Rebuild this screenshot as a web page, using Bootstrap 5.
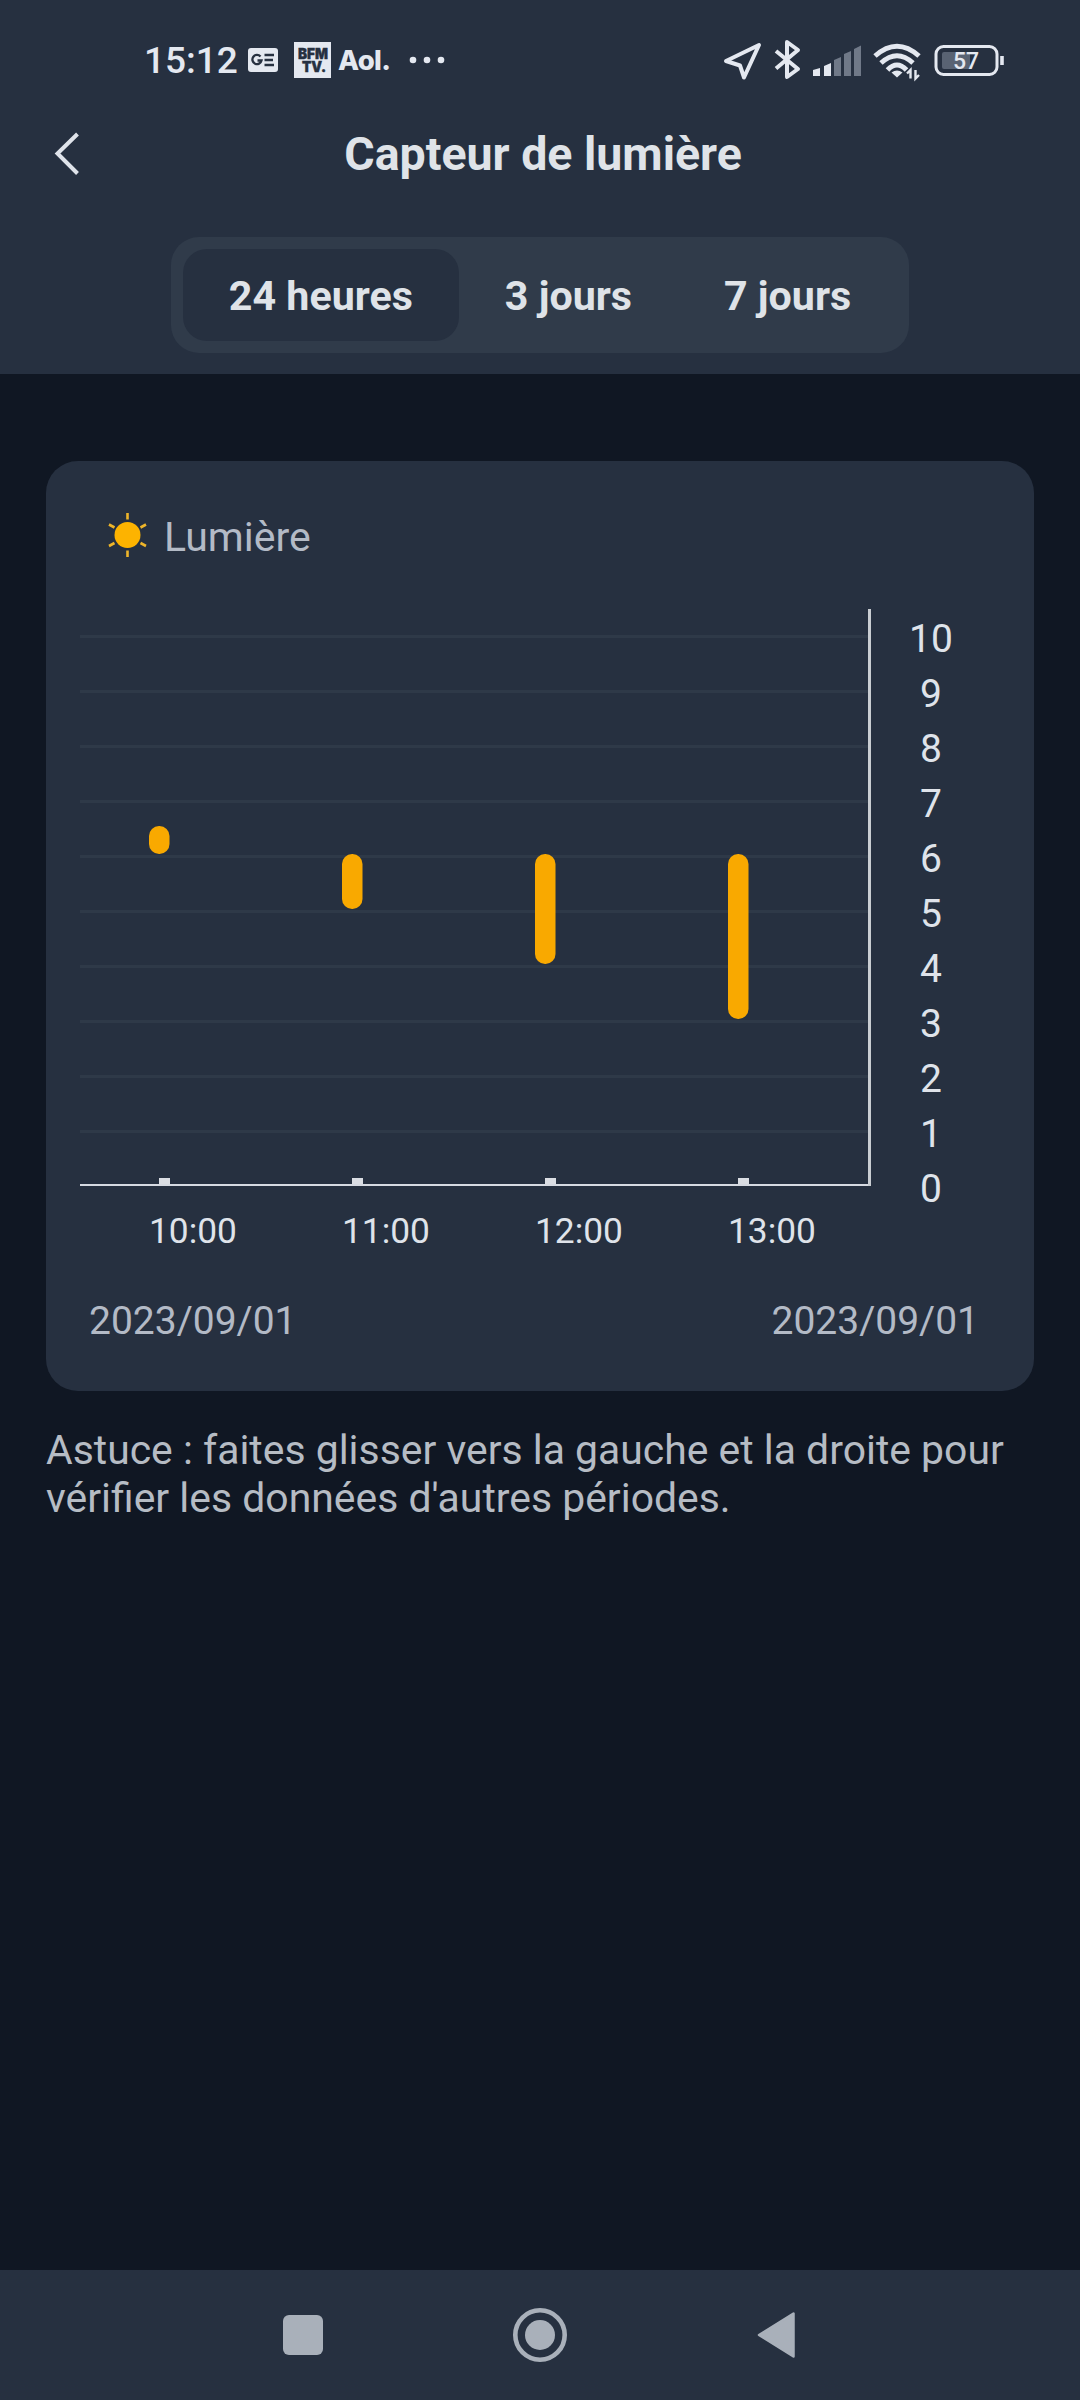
<!DOCTYPE html>
<html lang="fr" data-bs-theme="dark">
<head>
<meta charset="utf-8">
<meta name="viewport" content="width=device-width, initial-scale=1">
<title>Capteur de lumière</title>
<link href="https://cdn.jsdelivr.net/npm/bootstrap@5.3.0/dist/css/bootstrap.min.css" rel="stylesheet">
<style>
  body { font-family: Roboto, "Noto Sans", sans-serif; background: #101723; color: #dfe3ea; min-height: 2400px; }
  svg { display: block; flex: none; }
  .panel-bg { background: #263040; }
  .app-head { height: 374px; }
  .status { height: 110px; padding: 30px 76px 0 144px; color: #e4e8f0; }
  .clock { font-size: 37px; font-weight: 500; line-height: 62px; width: 104px; }
  .aol { font: 800 27.5px/60px Inter, sans-serif; letter-spacing: -.6px; width: 71px; margin-left: 7px; }
  .title-row { height: 88px; padding: 0 54px 0 54px; }
  .title-row h1 { font-size: 46.5px; font-weight: 700; line-height: 90px; color: #dfe3e8; }
  .seg { width: max-content; margin-top: 39px; padding: 12px; border-radius: 28px; background: #303b4a; }
  .seg .nav-link { height: 92px; line-height: 94px; padding: 0 46px; border-radius: 24px; font-size: 41.2px; font-weight: 700; color: #dfe3e8; }
  .seg .nav-link.active { background: #263040; color: #dfe3e8; }
  .light-card { margin: 87px 46px 0; height: 930px; border: 0; border-radius: 32px; background: #263040; color: #dfe3ea; }
  .legend { height: 148px; padding: 52px 0 0 62px; line-height: 49px; font-size: 41px; color: #b3bac6; }
  .y-labels { width: 120px; font-size: 39px; padding-top: 3px; height: 578px; }
  .y-labels div { line-height: 55px; height: 55px; }
  .x-labels { padding-left: 103px; font-size: 35.3px; line-height: 44px; margin-top: 22px; }
  .x-labels div { width: 193px; }
  .dates { padding: 0 55px 0 43px; margin-top: 44px; font-size: 39px; line-height: 48px; color: #b3bac6; }
  .tip { margin: 35px 46px 0; font-size: 40.9px; line-height: 48px; color: #b6bcc4; }
  .sys-nav { height: 130px; }
</style>
<script src="https://cdn.jsdelivr.net/npm/bootstrap@5.3.0/dist/js/bootstrap.bundle.min.js"></script>
</head>
<body class="d-flex flex-column">
<header class="app-head panel-bg">
  <div class="status d-flex justify-content-between">
    <div class="d-flex align-items-start">
      <div class="clock">15:12</div>
      <svg width="83" height="60" viewBox="0 0 83 60">
        <rect y="18" width="30" height="24" rx="3" fill="#e4e8f0"/>
        <path d="M12.500 26.500A4.600 4.600 0 1 0 13.500 30.500H9.500M16.500 25H26M16.500 30H25M16.500 35H26" fill="none" stroke="#263040" stroke-width="2.300"/>
        <rect x="46" y="12" width="37" height="36" fill="#e4e8f0"/>
        <g fill="#263040" stroke="#263040" stroke-width=".4" font-family="Inter, sans-serif" font-weight="900" font-size="14">
          <text x="50" y="29" textLength="30" lengthAdjust="spacingAndGlyphs">BFM</text>
          <text x="54" y="42" textLength="24" lengthAdjust="spacingAndGlyphs">TV.</text>
        </g>
      </svg>
      <div class="aol">Aol.</div>
      <svg width="36" height="60" fill="#e4e8f0"><circle cx="4" cy="30" r="3.300"/><circle cx="18" cy="30" r="3.300"/><circle cx="32" cy="30" r="3.300"/></svg>
    </div>
    <svg width="284" height="60" viewBox="720 30 284 60" fill="none" stroke="#e4e8f0">
      <path d="M726 61L759 45L744 77.500L740 65.500Z" stroke-width="4" stroke-linejoin="round"/>
      <path d="M776 51L798 69L787 77V42L798 50L776 68.500" stroke-width="4" stroke-linejoin="round"/>
      <g stroke="none" fill="#e4e8f0">
        <path d="M813 76V70L820 68V76ZM824 76V66L831 63V76Z"/>
        <path d="M834 76V60L841 57V76ZM844 76V54L851 51V76ZM854 76V49L861 45.500V76Z" fill="#707988"/>
      </g>
      <g stroke-width="5">
        <path d="M875 56Q897 36.500 919 56M881 63Q897 48.500 913 63M887.500 70Q897 60 906.500 70"/>
        <path d="M891.500 72.500Q897 68.500 902.500 72.500L897 77.500Z" fill="#e4e8f0" stroke="none"/>
      </g>
      <path d="M910.500 78.500V70L907 73.500M915.500 70V78.500L919 75" stroke-width="2.400"/>
      <rect x="936" y="46.500" width="61" height="28" rx="7.500" stroke-width="3"/>
      <rect x="942" y="52" width="28" height="17" rx="2" fill="#596373" stroke="none"/>
      <path d="M1002 56V65" stroke-width="3.600"/>
      <text x="966" y="69" text-anchor="middle" font-size="23" font-weight="500" fill="#e4e8f0" stroke="none">57</text>
    </svg>
  </div>
  <div class="title-row d-flex align-items-center">
    <svg width="26" height="44" viewBox="0 0 26 44" fill="none" stroke="#dfe3ea" stroke-width="4"><path d="M23.500 2L3.500 21.500L23.500 41.500"/></svg>
    <h1 class="flex-grow-1 text-center m-0">Capteur de lumière</h1>
    <span class="px-2 me-1"></span>
  </div>
  <nav class="nav nav-pills seg mx-auto">
    <a class="nav-link active" href="#">24 heures</a>
    <a class="nav-link" href="#">3 jours</a>
    <a class="nav-link" href="#">7 jours</a>
  </nav>
</header>

<main class="flex-grow-1">
  <section class="card light-card">
    <div class="legend d-flex">
      <svg width="56" height="46" viewBox="0 0 56 46"><circle cx="19.500" cy="22" r="13" fill="#fdb300"/><path d="M19.500 0V6.500M19.500 37.500V44M1 11.500L6.500 14.500M38 11.500L32.500 14.500M1 33L6.500 30M38 33L32.500 30" stroke="#eeb52a" stroke-width="2.600"/></svg>
      <span>Lumière</span>
    </div>
    <div class="d-flex">
      <svg width="825" height="578" viewBox="46 609 825 578">
        <path d="M80 636.500H868M80 691.500H868M80 746.500H868M80 801.500H868M80 856.500H868M80 911.500H868M80 966.500H868M80 1021.500H868M80 1076.500H868M80 1131.500H868" stroke="#2e3948" stroke-width="3"/>
        <g fill="#f9a900"><rect x="149" y="826" width="20.500" height="28" rx="10"/><rect x="342" y="854" width="20.500" height="55" rx="10"/><rect x="535" y="854" width="20.500" height="110" rx="10"/><rect x="728" y="854" width="20.500" height="165" rx="10"/></g>
        <path d="M159 1178H170V1184H159ZM352 1178H363V1184H352ZM545 1178H556V1184H545ZM738 1178H749V1184H738Z" fill="#dadde3"/>
        <path d="M80 1185H871" stroke="#d6dae2" stroke-width="2"/>
        <path d="M869.500 609V1186" stroke="#c9cdd2" stroke-width="3"/>
      </svg>
      <div class="y-labels text-center">
        <div>10</div><div>9</div><div>8</div><div>7</div><div>6</div><div>5</div><div>4</div><div>3</div><div>2</div><div>1</div><div>0</div>
      </div>
    </div>
    <div class="x-labels d-flex">
      <div>10:00</div><div>11:00</div><div>12:00</div><div>13:00</div>
    </div>
    <div class="dates d-flex justify-content-between"><span>2023/09/01</span><span>2023/09/01</span></div>
  </section>
  <p class="tip">Astuce : faites glisser vers la gauche et la droite pour vérifier les données d'autres périodes.</p>
</main>

<footer class="sys-nav panel-bg d-flex justify-content-center align-items-center">
  <svg width="514" height="60" viewBox="283 2305 514 60" fill="#a9b0ba">
    <rect x="283" y="2315" width="40" height="40" rx="6"/>
    <circle cx="540" cy="2335" r="24.700" fill="none" stroke="#a9b0ba" stroke-width="4.600"/><circle cx="540" cy="2335" r="15"/>
    <path d="M759 2335L793.500 2313.500V2356.500Z" stroke="#a9b0ba" stroke-width="2.500" stroke-linejoin="round"/>
  </svg>
</footer>
</body>
</html>
